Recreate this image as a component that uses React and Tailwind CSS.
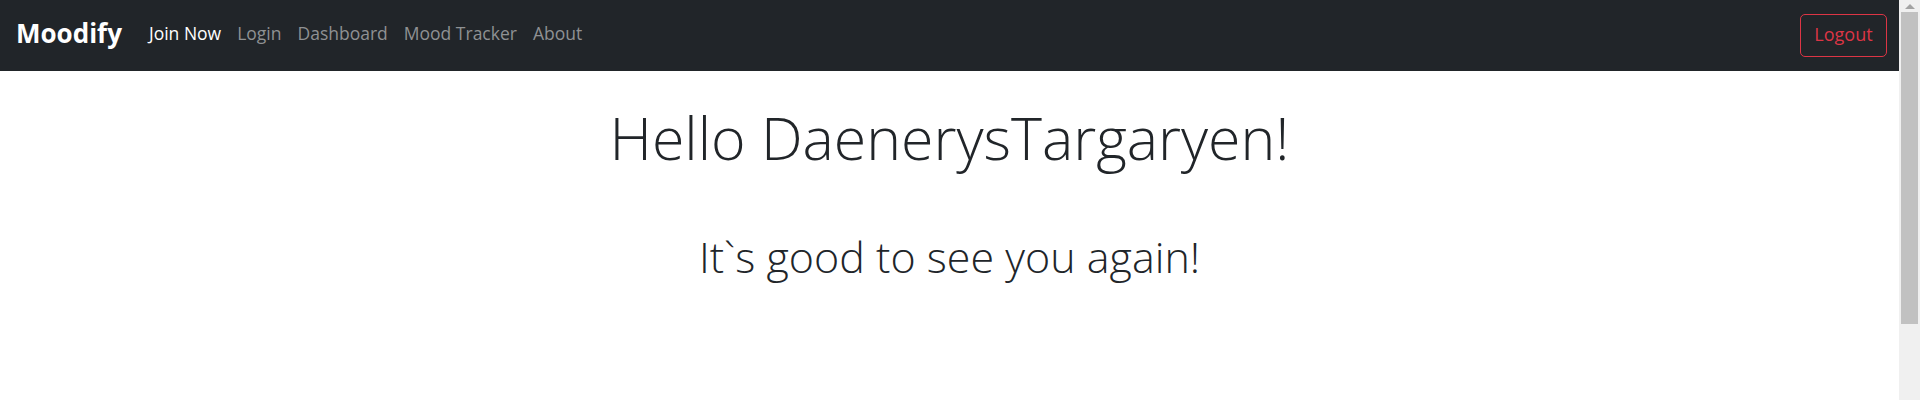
import React from 'react'

const links = [
  { label: 'Join Now', active: true },
  { label: 'Login' },
  { label: 'Dashboard' },
  { label: 'Mood Tracker' },
  { label: 'About' },
]

function Navbar() {
  return (
    <nav className="flex h-[71px] items-center justify-between bg-[#212529] pl-4 pr-3">
      <div className="flex items-center pb-[5px]">
        <a className="mr-[27px] text-[26px] font-bold text-white">Moodify</a>
        <ul className="flex items-center gap-[16px] text-[17.5px]">
          {links.map((l) => (
            <li key={l.label} className={l.active ? 'text-white' : 'text-[#8f9193]'}>
              {l.label}
            </li>
          ))}
        </ul>
      </div>
      <button className="h-[43px] w-[87px] rounded-[5px] border border-[#dc3545] pb-[2px] text-[18px] text-[#dc3545]">
        Logout
      </button>
    </nav>
  )
}

// fake classic scrollbar on the right edge, as in the screenshot
function Scrollbar() {
  return (
    <div className="flex w-[21px] shrink-0 flex-col bg-[#f0f0f0]">
      <div className="flex h-[12px] items-center justify-center">
        <div className="h-0 w-0 border-x-[5px] border-b-[5px] border-x-transparent border-b-[#a3a3a3]" />
      </div>
      <div className="mx-[2px] h-[312px] bg-[#c1c1c1]" />
    </div>
  )
}

export default function App() {
  return (
    <div className="flex h-[400px] w-full overflow-hidden bg-white" style={{ fontFamily: '"Open Sans", "Noto Sans", sans-serif' }}>
      <div className="flex-1">
        <Navbar />
        <main className="text-center text-[#212529]">
          <h1 className="mt-[31px] text-[59px] font-light leading-[1.2]">Hello DaenerysTargaryen!</h1>
          <h2 className="mt-[58px] text-[43px] font-light leading-[1.2]">It`s good to see you again!</h2>
        </main>
      </div>
      <Scrollbar />
    </div>
  )
}
